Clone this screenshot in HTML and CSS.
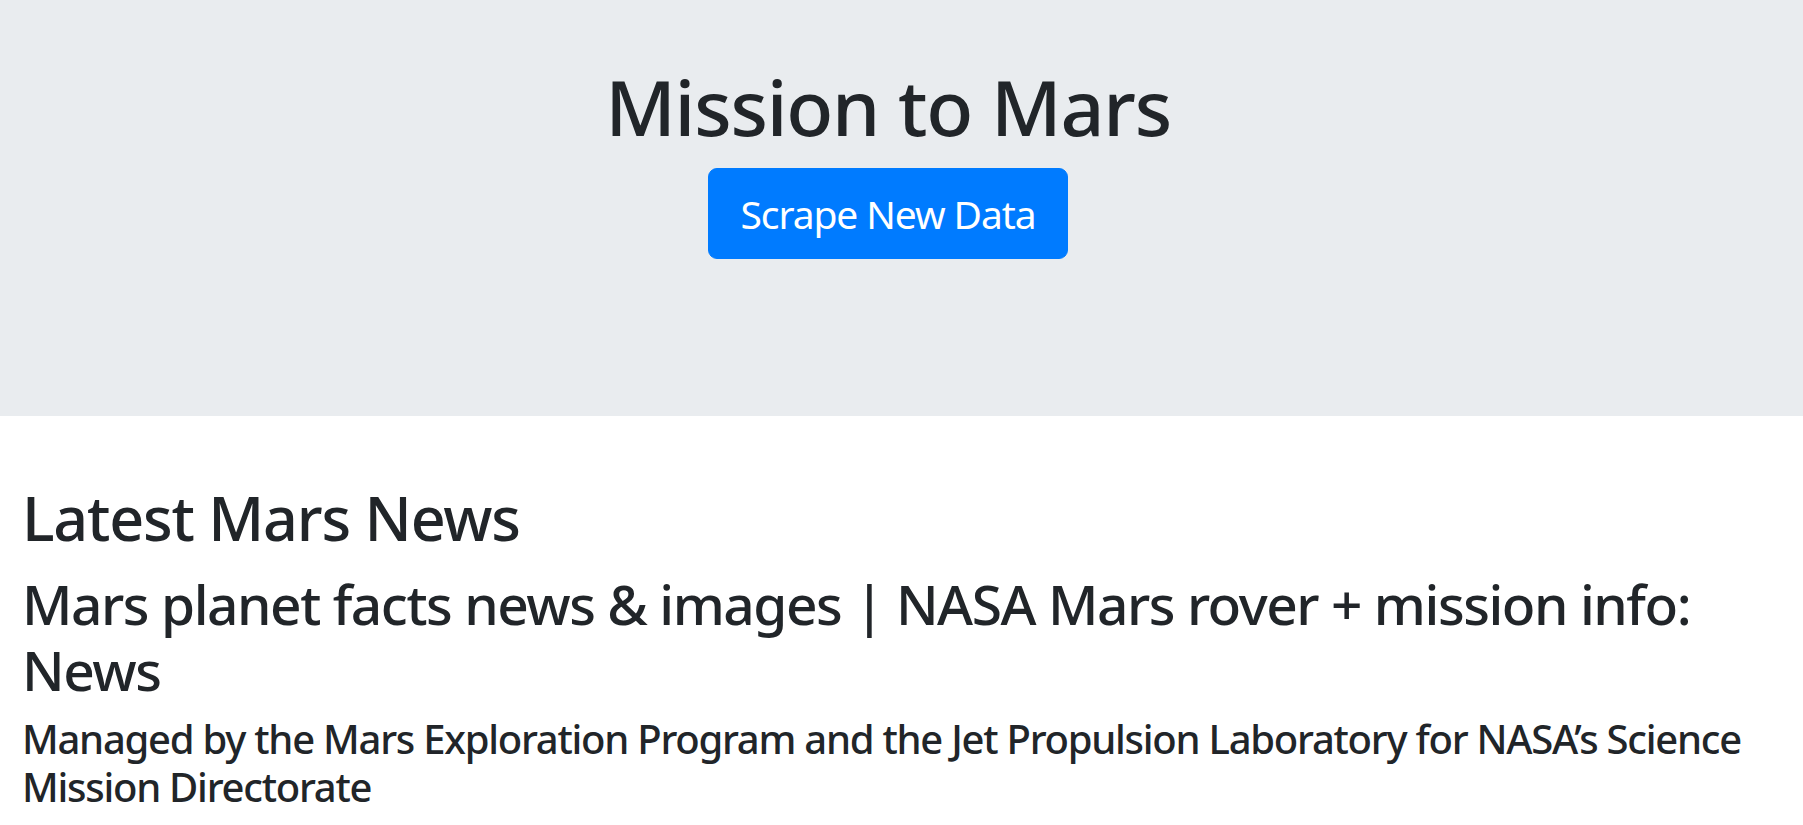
FILE: index.html
```html
<!DOCTYPE html>
<html lang="en">
<head>
<meta charset="utf-8">
<title>Mission to Mars</title>
<link rel="stylesheet" href="styles.css">
</head>
<body>
<header class="jumbotron">
  <h1 class="title">Mission to Mars</h1>
  <a class="btn" href="#">Scrape New Data</a>
</header>
<main class="content">
  <h2 class="section-title">Latest Mars News</h2>
  <h3 class="news-title">Mars planet facts news &amp; images | NASA Mars rover + mission info: News</h3>
  <h5 class="news-teaser">Managed by the Mars Exploration Program and the Jet Propulsion Laboratory for NASA’s Science Mission Directorate</h5>
</main>
</body>
</html>
```

FILE: styles.css
```css
html, body {
  margin: 0;
  padding: 0;
}
body {
  font-family: "Noto Sans", "Open Sans", sans-serif;
  color: #212529;
  background: #fff;
}
h1, h2, h3, h5 {
  margin: 0;
  font-weight: 500;
}
.jumbotron {
  background: #e9ecef;
  padding: 61px 27px 157px 0;
  display: flex;
  flex-direction: column;
  align-items: center;
}
.title {
  font-size: 77px;
  line-height: 1.2;
  letter-spacing: -1.2px;
  margin-bottom: 15px;
}
.btn {
  display: block;
  box-sizing: border-box;
  width: 360px;
  height: 91px;
  background: #007bff;
  color: #fff;
  text-decoration: none;
  text-align: center;
  font-size: 39px;
  line-height: 59px;
  letter-spacing: -1.1px;
  padding: 15px 0;
  border: 1px solid #007bff;
  border-radius: 9px;
}
.content {
  padding: 65px 8px 0 22px;
}
.section-title {
  font-size: 61px;
  line-height: 1.2;
  letter-spacing: -1.2px;
  margin-bottom: 16px;
}
.news-title {
  font-size: 55px;
  line-height: 66px;
  letter-spacing: -1.45px;
  margin-bottom: 12px;
}
.news-teaser {
  font-size: 40px;
  line-height: 48px;
  letter-spacing: -1.25px;
}
```
